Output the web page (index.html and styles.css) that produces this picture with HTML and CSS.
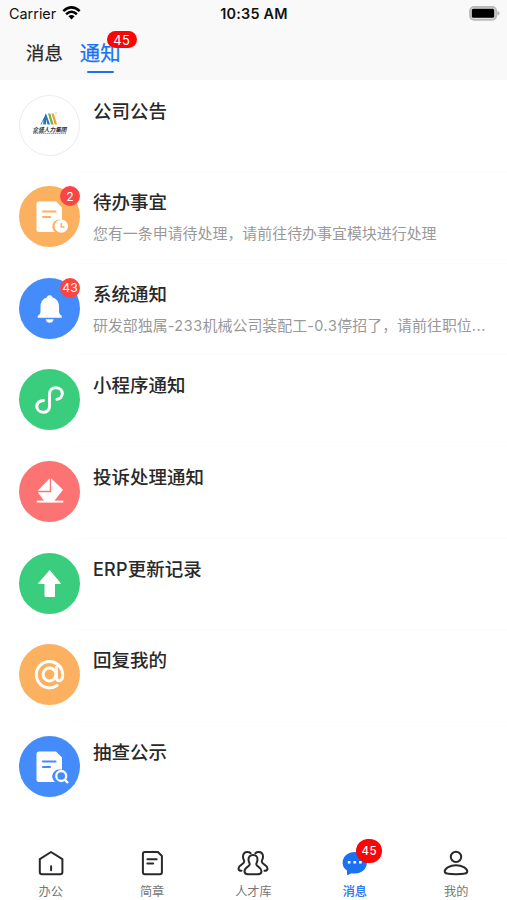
FILE: index.html
```html
<!DOCTYPE html>
<html lang="zh-CN">
<head>
<meta charset="utf-8">
<title>通知</title>
<link rel="stylesheet" href="styles.css">
</head>
<body>
<header class="top">
  <div class="status">
    <div class="carrier"><span>Carrier</span>
      <svg width="19" height="14" viewBox="0 0 19 14" fill="none" stroke="#000" stroke-width="2.5"><path d="M1.3 5.1Q9.5-2.3 17.7 5.1M4.1 8.2Q9.5 3.4 14.9 8.2"/><path d="M6.4 10.2Q9.5 7.7 12.6 10.2L9.5 13.4Z" fill="#000" stroke="none"/></svg>
    </div>
    <time class="time">10:35 AM</time>
    <svg class="battery" width="31" height="15" viewBox="0 0 31 15"><rect x="1" y="1" width="26.2" height="12.8" rx="4" fill="#ddd" stroke="#bababa" stroke-width="1.8"/><rect x="2.8" y="2.8" width="22.4" height="9" rx="1.6" fill="#000"/><path d="M28.4 5Q30.6 5.6 30.6 7.3T28.4 9.7Z" fill="#b5b5b5"/></svg>
  </div>
  <nav class="tabs">
    <a class="tab">消息</a>
    <a class="tab tab-active">通知<span class="badge tab-badge">45</span></a>
  </nav>
</header>
<main class="list">
  <section class="row">
    <div class="avatar logo">
      <svg width="60" height="60" viewBox="0 0 60 60"><path d="M20.5 28.5 26 17.5V28.5H23.3V24L21.5 28.5Z" fill="#2676b8"/><path d="M26 17.5 30 28.5H27.5L25 20Z" fill="#2676b8"/><path d="M28 17.5H30.3L33.5 28.5H31.2Z" fill="#79ac42"/><path d="M31.5 17.5H33.8L37 28.5H34.7Z" fill="#f4a020"/><circle cx="36" cy="17" r=".6" fill="#777"/><text x="12.5" y="35.5" class="logo-name" textLength="34" lengthAdjust="spacingAndGlyphs">企盛人力集团</text><path d="M13 37.5H46" stroke="#777" stroke-width=".7" stroke-dasharray="1.5 .5"/></svg>
    </div>
    <div class="copy"><h2>公司公告</h2></div>
  </section>
  <section class="row">
    <div class="avatar orange">
      <svg width="61" height="61" viewBox="0 0 61 61"><path d="M20 15.5H37L43 21.5V34A7 7 0 0 0 36 46H20Q17.5 46 17.5 43.5V18Q17.5 15.5 20 15.5Z" fill="#fff"/><path d="M24 25.5H36.5M24 31H31" stroke="#fcb160" stroke-width="2.2" stroke-linecap="round"/><circle cx="42.3" cy="40.2" r="6.6" fill="#fff"/><path d="M42.3 37V41H45.4" fill="none" stroke="#fcb160" stroke-width="1.5"/></svg>
      <span class="badge dot">2</span>
    </div>
    <div class="copy"><h2>待办事宜</h2><p>您有一条申请待处理，请前往待办事宜模块进行处理</p></div>
  </section>
  <section class="row">
    <div class="avatar blue">
      <svg width="61" height="61" viewBox="0 0 61 61" fill="#fff"><path d="M18.7 39.7V38Q21.5 36.5 21.5 34V29Q21.5 21.5 27.7 19.5Q28.3 17.3 30.7 17.3T33.7 19.5Q40 21.5 40 29V34Q40 36.5 42.7 38V39.7ZM26.7 41.2H34.7Q33.8 44.8 30.7 44.8T26.7 41.2Z"/></svg>
      <span class="badge dot">43</span>
    </div>
    <div class="copy"><h2>系统通知</h2><p>研发部独属<span class="num">-233</span>机械公司装配工<span class="num">-0.3</span>停招了，请前往职位<span class="num">...</span></p></div>
  </section>
  <section class="row">
    <div class="avatar green">
      <svg width="61" height="61" viewBox="0 0 61 61" fill="none" stroke="#fff" stroke-width="3" stroke-linecap="round"><path d="M24.4 31.5C19.5 32 17.8 35 17.8 37.5C17.8 41 21 43.2 24.6 43.2C28.5 43.2 30.5 40.5 30.5 37V25C30.5 21.5 33 18.7 36.7 18.7C40.5 18.7 43.3 21.2 43.3 24.6C43.3 27.7 41 30 38 30.3"/></svg>
    </div>
    <div class="copy"><h2>小程序通知</h2></div>
  </section>
  <section class="row">
    <div class="avatar red">
      <svg width="61" height="61" viewBox="0 0 61 61" fill="#fff"><path d="M30.8 17.2V29.8H18.7Z"/><path d="M32 17.2 44 28.8 35.2 39.9H25.2L18.8 31.3H32Z"/><rect x="17.8" y="39.6" width="26.5" height="2"/></svg>
    </div>
    <div class="copy"><h2>投诉处理通知</h2></div>
  </section>
  <section class="row">
    <div class="avatar green">
      <svg width="61" height="61" viewBox="0 0 61 61"><path d="M30.7 17.6 41.5 30.5H35.5V43.5H26V30.5H19.5Z" fill="#fff" stroke="#fff" stroke-linejoin="round"/></svg>
    </div>
    <div class="copy"><h2><span class="latin">ERP</span>更新记录</h2></div>
  </section>
  <section class="row">
    <div class="avatar orange">
      <svg width="61" height="61" viewBox="0 0 61 61" fill="none" stroke="#fff" stroke-width="3"><circle cx="30.5" cy="30.5" r="6.4"/><path d="M37.4 23.2V33.5C37.4 38.7 43.7 37.8 43.7 30.7A13.2 13.2 0 1 0 38 41.6" stroke-linecap="round"/></svg>
    </div>
    <div class="copy"><h2>回复我的</h2></div>
  </section>
  <section class="row">
    <div class="avatar blue">
      <svg width="61" height="61" viewBox="0 0 61 61"><path d="M20 15.5H37L43 21.5V34A7 7 0 0 0 36 46H20Q17.5 46 17.5 43.5V18Q17.5 15.5 20 15.5Z" fill="#fff"/><path d="M24 25.5H36.5M24 31H31" stroke="#448cfb" stroke-width="2.2" stroke-linecap="round"/><circle cx="42.2" cy="40" r="6.5" fill="#448cfb"/><circle cx="42.2" cy="40" r="5" fill="#448cfb" stroke="#fff" stroke-width="2.3"/><path d="M45.8 43.7 49 47" stroke="#fff" stroke-width="2.5"/></svg>
    </div>
    <div class="copy"><h2>抽查公示</h2></div>
  </section>
</main>
<footer class="bar">
  <a class="item">
    <svg width="32" height="32" viewBox="0 0 32 32"><path d="M4.8 12.2 16 5 27.4 12.2V25Q27.4 27.3 25.1 27.3H7.1Q4.8 27.3 4.8 25ZM16.1 19.3V23.3"/></svg><span>办公</span></a>
  <a class="item">
    <svg width="32" height="32" viewBox="0 0 32 32"><path d="M8.9 5H21.9L25.9 9V25.2Q25.9 27.2 23.9 27.2H8.9Q6.9 27.2 6.9 25.2V7Q6.9 5 8.9 5ZM11.4 12.3H20.7M11.4 16.5H17.1"/></svg><span>简章</span></a>
  <a class="item">
    <svg width="32" height="32" viewBox="0 0 32 32"><path d="M16 8C18.8 8 20.5 10 20.5 12.5C20.5 15 19.3 16 19.3 17.2C19.3 20 24.5 20 24.5 24.2C24.5 26.4 23.3 27.2 21 27.2H11C8.7 27.2 7.5 26.4 7.5 24.2C7.5 20 12.7 20 12.7 17.2C12.7 16 11.5 15 11.5 12.5C11.5 10 13.2 8 16 8Z"/><path d="M13.6 6.2C12.7 5.3 11.6 5 10.5 5C7.5 5 6 7.2 6 9.7C6 12.2 7.2 13 7.2 14.6C7.2 17.5 1.5 17.8 1.5 21.4C1.5 23 2.7 23.8 4.5 23.8M18.4 6.2C19.3 5.3 20.4 5 21.5 5C24.5 5 26 7.2 26 9.7C26 12.2 24.8 13 24.8 14.6C24.8 17.5 30.5 17.8 30.5 21.4C30.5 23 29.3 23.8 27.5 23.8"/></svg><span>人才库</span></a>
  <a class="item current">
    <svg width="32" height="32" viewBox="0 0 32 32"><path d="M15.8 5C9 5 3.6 9.5 3.6 15.8C3.6 19.3 5.3 21.8 8 23.6V28.2L12.7 26.3Q14.2 26.6 15.8 26.6C22.5 26.6 27.9 22 27.9 15.8S22.5 5 15.8 5Z" fill="#1a71f2" stroke="none"/><path d="M8.8 13.9H11.5V16.6H8.8ZM14.4 13.9H17.1V16.6H14.4ZM20 13.9H22.7V16.6H20Z" fill="#fff" stroke="none"/></svg><span>消息</span><b class="badge bar-badge">45</b></a>
  <a class="item">
    <svg width="32" height="32" viewBox="0 0 32 32"><circle cx="16" cy="9.9" r="5.2"/><path d="M16 18.2C21.8 18.2 27.3 21.2 27.3 24.5C27.3 26.6 24.3 27.2 16 27.2S4.7 26.6 4.7 24.5C4.7 21.2 10.2 18.2 16 18.2Z"/></svg><span>我的</span></a>
</footer>
</body>
</html>
```
FILE: styles.css
```css
* { box-sizing: border-box; }
body {
  margin: 0;
  height: 900px;
  display: flex;
  flex-direction: column;
  overflow: hidden;
  background: #fff;
  color: #292929;
  font-family: "Noto Sans CJK SC", sans-serif;
}
svg { display: block; flex: none; }
.top { height: 79.5px; background: #f9f9f9; flex: none; }
.status {
  height: 28px;
  padding: 0 7px 0 9px;
  display: grid;
  grid-template-columns: 1fr auto 1fr;
  align-items: center;
  font-family: Inter, sans-serif;
  font-size: 14.4px;
  color: #111;
}
.carrier { display: flex; align-items: center; gap: 6px; font-size: 14.4px; }
.carrier span { margin-top: -1px; }
.carrier svg { margin-top: -2px; }
.time { font-weight: 600; letter-spacing: .2px; margin: -1px 1px 0 0; }
.battery { justify-self: end; margin-top: -2px; }
.tabs { display: flex; height: 48px; padding-left: 26px; gap: 17px; align-items: center; }
.tab { font-size: 18.4px; line-height: 30px; -webkit-text-stroke: .25px currentColor; }
.tab-active { position: relative; color: #1a71f2; font-size: 20.4px; }
.tab-active::after {
  content: "";
  position: absolute;
  left: 7.5px;
  top: 34px;
  width: 26.5px;
  height: 2.4px;
  border-radius: 2px;
  background: #1a71f2;
}
.badge {
  position: absolute;
  display: flex;
  align-items: center;
  justify-content: center;
  color: #fff;
  font-family: Inter, sans-serif;
  font-weight: 400;
  -webkit-text-stroke: 0;
}
.tab-badge { left: 27px; top: -6px; width: 30px; height: 17px; border-radius: 9px; background: #f90606; font-size: 13px; letter-spacing: .4px; }
.list { flex: none; }
.row { height: 91.65px; padding: 15px 19px 0; display: flex; gap: 13px; }
.row + .row { background: linear-gradient(#fcfcfc, #fcfcfc) 74px 0 / 100% 1px no-repeat; }
.avatar { position: relative; width: 61px; height: 61px; border-radius: 50%; flex: none; }
.logo { border: 1px solid #ebebeb; }
.logo-name { font-size: 6.2px; font-weight: 700; font-style: italic; fill: #333; }
.orange { background: #fcb160; }
.blue { background: #448cfb; }
.green { background: #3bcd7e; }
.red { background: #fb7373; }
.dot { right: 0; top: 0; width: 20px; height: 20px; border-radius: 50%; background: #fb4545; font-size: 12.2px; }
.copy { min-width: 0; flex: 1; }
h2 { margin: 1px 0 0; font-size: 18.5px; line-height: 28px; font-weight: 500; white-space: nowrap; }
.latin { font-family: Inter, sans-serif; font-size: 18px; font-weight: 500; letter-spacing: .2px; }
p { margin: 6px 0 0; font-size: 14.95px; line-height: 24px; color: #999; white-space: nowrap; }
.num { font-family: Inter, sans-serif; font-size: 14.4px; letter-spacing: .55px; }
.bar { margin-top: auto; height: 53px; display: flex; flex: none; }
.item { position: relative; width: 20%; display: flex; flex-direction: column; align-items: center; font-size: 12.2px; line-height: 18px; color: #777; }
.item svg { width: 32px; height: 32px; fill: none; stroke: #292929; stroke-width: 2; stroke-linecap: round; stroke-linejoin: round; }
.item span { margin-top: 3px; }
.current { color: #1a71f2; -webkit-text-stroke: .25px currentColor; }
.bar-badge { left: 52px; top: -8px; width: 26px; height: 24px; border-radius: 12px; background: #f90606; font-size: 11.5px; font-weight: 500; letter-spacing: .4px; }
```
